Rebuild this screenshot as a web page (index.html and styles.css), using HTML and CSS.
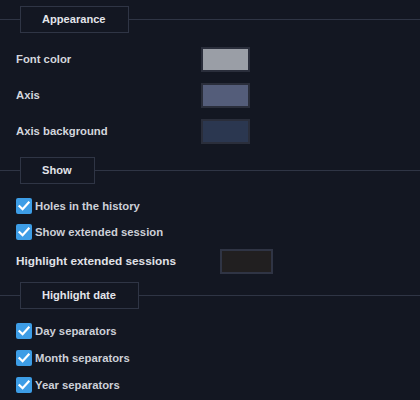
FILE: index.html
```html
<!DOCTYPE html>
<html>
<head>
<meta charset="utf-8">
<link rel="stylesheet" href="styles.css">
</head>
<body>
<div class="panel">
  <div class="section-head head-first"><span class="section-title">Appearance</span></div>
  <div class="field-row row-first"><span class="label">Font color</span><span class="swatch swatch-font"></span></div>
  <div class="field-row"><span class="label">Axis</span><span class="swatch swatch-axis"></span></div>
  <div class="field-row"><span class="label">Axis background</span><span class="swatch swatch-axisbg"></span></div>

  <div class="section-head head-show"><span class="section-title">Show</span></div>
  <div class="check-row check-first"><span class="check"><svg viewBox="0 0 16 16" width="16" height="16"><path d="M3.5 8.2 L6.6 11.2 L12.6 4.6" fill="none" stroke="#fff" stroke-width="2.2" stroke-linecap="square"/></svg></span><span class="check-label">Holes in the history</span></div>
  <div class="check-row"><span class="check"><svg viewBox="0 0 16 16" width="16" height="16"><path d="M3.5 8.2 L6.6 11.2 L12.6 4.6" fill="none" stroke="#fff" stroke-width="2.2" stroke-linecap="square"/></svg></span><span class="check-label">Show extended session</span></div>
  <div class="field-row row-ext"><span class="label label-wide">Highlight extended sessions</span><span class="swatch swatch-ext"></span></div>

  <div class="section-head head-date"><span class="section-title">Highlight date</span></div>
  <div class="check-row check-first"><span class="check"><svg viewBox="0 0 16 16" width="16" height="16"><path d="M3.5 8.2 L6.6 11.2 L12.6 4.6" fill="none" stroke="#fff" stroke-width="2.2" stroke-linecap="square"/></svg></span><span class="check-label">Day separators</span></div>
  <div class="check-row check-date"><span class="check"><svg viewBox="0 0 16 16" width="16" height="16"><path d="M3.5 8.2 L6.6 11.2 L12.6 4.6" fill="none" stroke="#fff" stroke-width="2.2" stroke-linecap="square"/></svg></span><span class="check-label">Month separators</span></div>
  <div class="check-row check-date"><span class="check"><svg viewBox="0 0 16 16" width="16" height="16"><path d="M3.5 8.2 L6.6 11.2 L12.6 4.6" fill="none" stroke="#fff" stroke-width="2.2" stroke-linecap="square"/></svg></span><span class="check-label">Year separators</span></div>
</div>
</body>
</html>
```
FILE: styles.css
```css
html, body {
  margin: 0;
  padding: 0;
  background: #131722;
}
body {
  width: 420px;
  height: 400px;
  overflow: hidden;
  font-family: "Liberation Sans", Arial, sans-serif;
  font-size: 11.3px;
  font-weight: bold;
  color: #d3d6dd;
}
.panel {
  padding-top: 6px;
}
.section-head {
  display: flex;
  align-items: center;
  height: 27px;
}
.section-head::before {
  content: "";
  width: 20px;
  height: 1px;
  background: #2f3545;
}
.section-head::after {
  content: "";
  flex: 1;
  height: 1px;
  background: #2f3545;
}
.section-title {
  box-sizing: border-box;
  height: 27px;
  line-height: 25px;
  padding: 0 22px 0 21px;
  border: 1px solid #2f3545;
  color: #e3e5ea;
  font-size: 11.1px;
}
.head-show { margin-top: 13px; }
.head-date { margin-top: 8px; }

.field-row {
  display: flex;
  align-items: center;
  height: 25px;
  margin-top: 11px;
  padding-left: 16px;
}
.row-first { margin-top: 14px; }
.label {
  width: 185px;
  padding-bottom: 1px;
}
.label-wide {
  width: 204px;
  font-size: 11.8px;
  color: #e0e2e8;
}
.row-ext { margin-top: 9px; }
.swatch {
  box-sizing: border-box;
  width: 49px;
  height: 25px;
  border: 2px solid #2a2e3b;
}
.swatch-font { background: #9a9ea6; }
.swatch-axis { background: #545d7a; }
.swatch-axisbg { background: #2b3750; }
.swatch-ext {
  width: 53px;
  background: #211f20;
  border-color: #2f3444;
}

.check-row {
  display: flex;
  align-items: center;
  height: 16px;
  margin-top: 10px;
  padding-left: 16px;
}
.check-first { margin-top: 14px; }
.check-date { margin-top: 11px; }
.check {
  width: 16px;
  height: 16px;
  border-radius: 2px;
  background: #3d9de6;
  display: flex;
}
.check svg { display: block; }
.check-label {
  margin-left: 3px;
  color: #cdd0d8;
}
```
